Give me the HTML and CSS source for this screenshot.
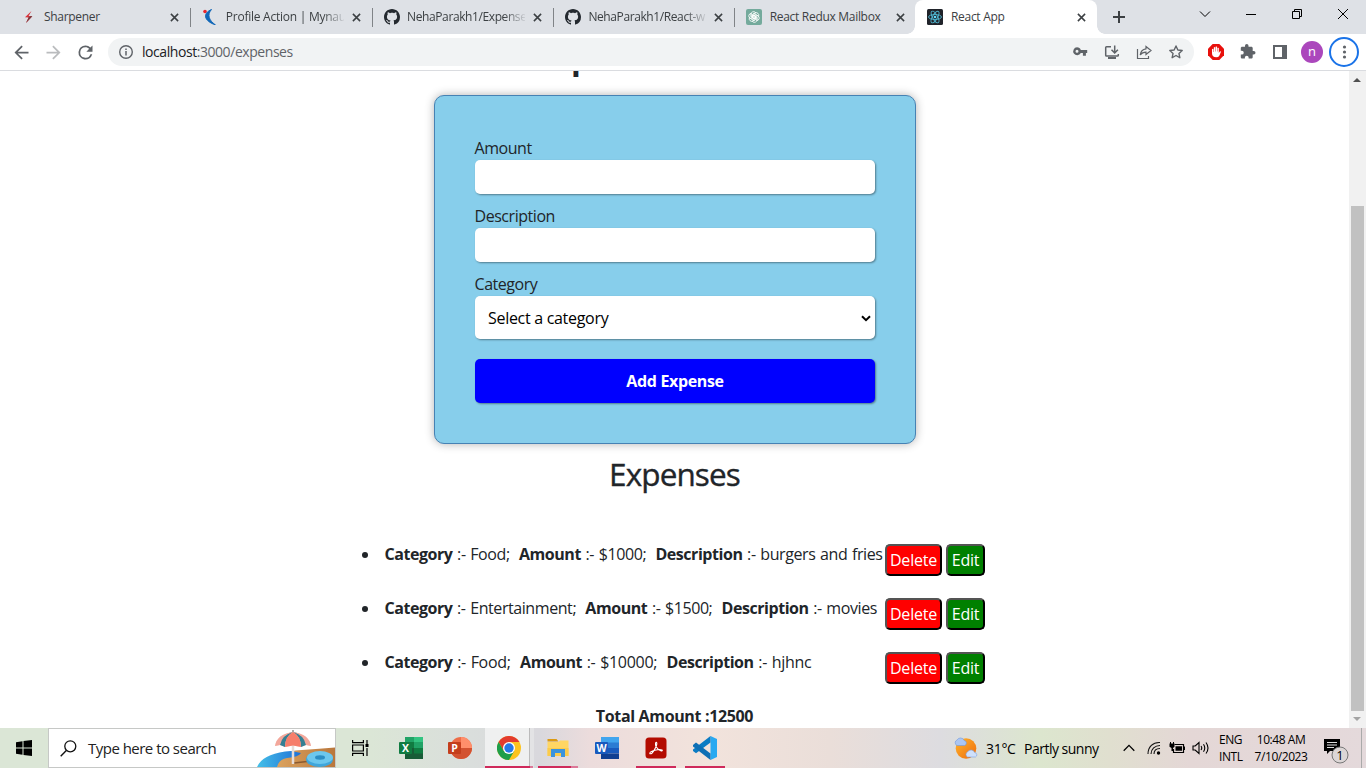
FILE: index.html
```html
<!DOCTYPE html>
<html lang="en">
<head>
<meta charset="utf-8">
<title>React App</title>
<link rel="stylesheet" href="styles.css">
</head>
<body>
<header class="tabstrip">
  <div class="tab"><svg class="fav" viewBox="0 0 16 16"><path d="M10.5 2 4 8.3l3.6.3L5 14l6.300-6.700-3.700-.3z" fill="#d8333b"/><path d="M7.600 8.600 5 14l6.300-6.700-2-.2z" fill="#7a3b40"/></svg><span class="title t1">Sharpener</span><svg class="x" viewBox="0 0 10 10"><path d="M1 1l8 8M9 1 1 9"/></svg></div>
  <div class="tab sep"><svg class="fav" viewBox="0 0 16 16"><circle cx="3" cy="2.500" r="1.800" fill="#e8262d"/><path d="M9.500.5C1 4 1 11.500 13.500 16 6.500 11 5 5.500 9.500.5z" fill="#1268b8" stroke="#1268b8"/></svg><span class="title t2 fade">Profile Action | Mynau</span><svg class="x" viewBox="0 0 10 10"><path d="M1 1l8 8M9 1 1 9"/></svg></div>
  <div class="tab sep"><svg class="fav" viewBox="0 0 16 16"><path fill="#24292f" d="M8 0C3.580 0 0 3.580 0 8c0 3.540 2.290 6.530 5.470 7.590.4.070.55-.17.55-.38 0-.19-.01-.82-.01-1.490-2.010.37-2.530-.49-2.690-.94-.09-.23-.48-.94-.82-1.130-.28-.15-.68-.52-.01-.53.63-.01 1.080.58 1.230.82.72 1.210 1.870.87 2.330.66.07-.52.28-.87.51-1.070-1.780-.2-3.640-.89-3.640-3.950 0-.87.31-1.590.82-2.150-.08-.2-.36-1.020.08-2.120 0 0 .67-.21 2.200.82.64-.18 1.320-.27 2-.27s1.360.09 2 .27c1.530-1.040 2.200-.82 2.200-.82.44 1.100.16 1.920.08 2.120.51.56.82 1.270.82 2.150 0 3.070-1.870 3.750-3.650 3.950.29.25.54.73.54 1.480 0 1.070-.01 1.930-.01 2.200 0 .21.15.46.55.38A8.010 8.010 0 0 0 16 8c0-4.420-3.580-8-8-8z"/></svg><span class="title t3 fade">NehaParakh1/Expense</span><svg class="x" viewBox="0 0 10 10"><path d="M1 1l8 8M9 1 1 9"/></svg></div>
  <div class="tab sep"><svg class="fav" viewBox="0 0 16 16"><path fill="#24292f" d="M8 0C3.580 0 0 3.580 0 8c0 3.540 2.290 6.530 5.470 7.590.4.070.55-.17.55-.38 0-.19-.01-.82-.01-1.490-2.010.37-2.530-.49-2.690-.94-.09-.23-.48-.94-.82-1.130-.28-.15-.68-.52-.01-.53.63-.01 1.080.58 1.230.82.72 1.210 1.870.87 2.330.66.07-.52.28-.87.51-1.070-1.780-.2-3.640-.89-3.640-3.950 0-.87.31-1.590.82-2.150-.08-.2-.36-1.020.08-2.120 0 0 .67-.21 2.200.82.64-.18 1.320-.27 2-.27s1.360.09 2 .27c1.530-1.040 2.200-.82 2.200-.82.44 1.100.16 1.920.08 2.120.51.56.82 1.270.82 2.150 0 3.070-1.870 3.750-3.650 3.950.29.25.54.73.54 1.480 0 1.070-.01 1.930-.01 2.200 0 .21.15.46.55.38A8.010 8.010 0 0 0 16 8c0-4.420-3.580-8-8-8z"/></svg><span class="title t3 fade">NehaParakh1/React-w</span><svg class="x" viewBox="0 0 10 10"><path d="M1 1l8 8M9 1 1 9"/></svg></div>
  <div class="tab sep"><svg class="fav" viewBox="0 0 16 16"><rect width="16" height="16" rx="2" fill="#74aa9c"/><g fill="none" stroke="#fff" stroke-width=".8"><path id="pt" d="M8 9.800 5 8V5.200a2.600 2.600 0 0 1 4.700-1.500L7 5.300v4"/><use href="#pt" transform="rotate(60 8 8)"/><use href="#pt" transform="rotate(120 8 8)"/><use href="#pt" transform="rotate(180 8 8)"/><use href="#pt" transform="rotate(240 8 8)"/><use href="#pt" transform="rotate(300 8 8)"/></g></svg><span class="title t5">React Redux Mailbox</span><svg class="x" viewBox="0 0 10 10"><path d="M1 1l8 8M9 1 1 9"/></svg></div>
  <div class="tab active"><svg class="fav" viewBox="0 0 16 16"><rect width="16" height="16" rx="1.500" fill="#20232a"/><g fill="none" stroke="#4fb6d0" stroke-width=".9"><ellipse cx="8" cy="8" rx="6.500" ry="2.500"/><ellipse cx="8" cy="8" rx="6.500" ry="2.500" transform="rotate(60 8 8)"/><ellipse cx="8" cy="8" rx="6.500" ry="2.500" transform="rotate(120 8 8)"/></g><circle cx="8" cy="8" r="1.300" fill="#61dafb"/></svg><span class="title t6">React App</span><svg class="x" viewBox="0 0 10 10"><path d="M1 1l8 8M9 1 1 9"/></svg></div>
  <svg class="plus" viewBox="0 0 12 12"><path d="M6 0v12M0 6h12" stroke="#3c4043" stroke-width="2"/></svg>
  <div class="winctl">
    <svg viewBox="0 0 46 28"><path d="M18 11.500l5 5 5-5"/></svg>
    <svg viewBox="0 0 46 28"><path d="M18 14.500h10"/></svg>
    <svg viewBox="0 0 46 28"><path d="M18.500 11.500h7v7h-7zM20.500 11.500v-2h7v7h-2"/></svg>
    <svg viewBox="0 0 46 28"><path d="M18 9l10 10M28 9 18 19"/></svg>
  </div>
</header>
<nav class="toolbar">
  <div class="navicons">
    <svg viewBox="0 0 24 24"><path fill="#5f6368" d="M20 11H7.830l5.590-5.590L12 4l-8 8 8 8 1.410-1.410L7.830 13H20z"/></svg>
    <svg viewBox="0 0 24 24"><path fill="#babcbe" d="M12 4l-1.410 1.410L16.170 11H4v2h12.170l-5.580 5.590L12 20l8-8z"/></svg>
    <svg viewBox="0 0 24 24"><path fill="#5f6368" d="M17.650 6.350A7.960 7.960 0 0 0 12 4a8 8 0 1 0 7.730 10h-2.080A6 6 0 1 1 12 6c1.660 0 3.140.69 4.220 1.780L13 11h7V4z"/></svg>
  </div>
  <div class="omnibox">
    <svg class="info" viewBox="0 0 16 16"><circle cx="8" cy="8" r="6.300" fill="none" stroke="#5f6368" stroke-width="1.400"/><path d="M8 7v4.500M8 4.500v1.500" stroke="#5f6368" stroke-width="1.500"/></svg>
    <span class="url"><b>localhost</b>:3000/expenses</span>
    <div class="cells">
      <svg viewBox="0 0 32 28"><path fill="#5f6368" fill-rule="evenodd" d="M13 9.300a4 4 0 0 1 3.800 2.800h6.400v3h-1.300v2.700h-3v-2.700h-2.100A4 4 0 1 1 13 9.300zm0 2.500a1.500 1.500 0 1 0 0 3 1.500 1.500 0 0 0 0-3z"/></svg>
      <svg viewBox="0 0 32 28"><g fill="none" stroke="#5f6368" stroke-width="1.500"><path d="M15 8.700h-4.500q-.8 0-.8.800v7.700q0 .8.800.8h11q.8 0 .8-.8V16M18.700 7.500v7M15.500 11.700l3.200 3.200 3.200-3.200"/><path d="M12 20h8" stroke-width="2"/></g></svg>
      <svg viewBox="0 0 32 28"><g fill="none" stroke="#5f6368" stroke-width="1.200"><path d="M9.500 11v9.500h11V18"/><path d="M18 8.500l5 4-5 4v-2.400c-3 0-4.500 1-5.800 2.900.4-3.200 2.200-5.800 5.800-6.200z"/></g></svg>
      <svg viewBox="0 0 32 28"><path fill="none" stroke="#5f6368" stroke-width="1.400" stroke-linejoin="round" d="M16 8l1.850 4.050 4.350.45-3.250 2.950.9 4.300L16 17.500l-3.850 2.250.9-4.300-3.250-2.950 4.350-.45z"/></svg>
    </div>
  </div>
  <div class="cells ext">
    <svg viewBox="0 0 32 28"><path fill="#e8100c" d="M12.700 6h6.600l4.700 4.700v6.600L19.300 22h-6.600L8 17.300v-6.600z"/><path fill="#fff" d="M12 11.200q.8-.8 1.400 0V14h.4V9.500q.7-.8 1.400 0V13.500h.4V8.800q.8-.8 1.500 0v4.700h.4V10q.8-.7 1.300 0v5l1-1.600q.9-.5 1.200.3l-1.700 4q-.8 1.600-3 1.600-4.300 0-4.300-4z"/></svg>
    <svg viewBox="0 0 32 28"><path fill="#5f6368" transform="translate(7.400 5.200) scale(.7)" d="M20.500 11H19V7c0-1.100-.9-2-2-2h-4V3.500a2.500 2.500 0 0 0-5 0V5H4c-1.100 0-2 .9-2 2v3.800h1.500a2.700 2.700 0 0 1 0 5.400H2V20c0 1.100.9 2 2 2h3.800v-1.500a2.700 2.700 0 0 1 5.400 0V22H17c1.100 0 2-.9 2-2v-4h1.500a2.500 2.500 0 0 0 0-5z"/></svg>
    <svg viewBox="0 0 32 28"><path fill="#5f6368" fill-rule="evenodd" d="M9 7h14v14H9zm2 2v10h7V9z"/></svg>
    <span class="cell"><span class="avatar">n</span></span>
    <span class="cell"><svg class="menu" viewBox="0 0 30 30"><circle cx="15" cy="15" r="14" fill="#fff" stroke="#1a73e8" stroke-width="2"/><g fill="#5f6368"><circle cx="15.500" cy="10" r="1.600"/><circle cx="15.500" cy="15" r="1.600"/><circle cx="15.500" cy="20" r="1.600"/></g></svg></span>
  </div>
</nav>
<div class="viewport">
  <main class="page">
    <h1 class="clipped"><span>p</span></h1>
    <section class="card">
      <label>Amount</label><div class="input"></div>
      <label class="l2">Description</label><div class="input"></div>
      <label class="l3">Category</label>
      <div class="select"><span>Select a category</span><svg viewBox="0 0 10 7"><path d="M1 1.200l4 4 4-4" fill="none" stroke="#000" stroke-width="2"/></svg></div>
      <div class="add"><span>Add Expense</span></div>
    </section>
    <h2>Expenses</h2>
    <ul>
      <li><p class="r1"><b>Category</b> :- Food;&nbsp; <b>Amount</b> :- $1000;&nbsp; <b>Description</b> :- burgers and fries</p><button class="del">Delete</button><button class="edit">Edit</button></li>
      <li><p class="r2"><b>Category</b> :- Entertainment;&nbsp; <b>Amount</b> :- $1500;&nbsp; <b>Description</b> :- movies</p><button class="del">Delete</button><button class="edit">Edit</button></li>
      <li><p class="r3"><b>Category</b> :- Food;&nbsp; <b>Amount</b> :- $10000;&nbsp; <b>Description</b> :- hjhnc</p><button class="del">Delete</button><button class="edit">Edit</button></li>
    </ul>
    <p class="total">Total Amount :12500</p>
  </main>
  <aside class="scrollbar"><i class="up"></i><i class="thumb"></i><i class="down"></i></aside>
</div>
<footer class="taskbar">
  <div class="start"><svg width="16" height="16" viewBox="0 0 16 16"><path d="M0 2.200 6.500 1.300v6.200H0zM7.500 1.100 16 0v7.500H7.500zM0 8.500h6.500v6.200L0 13.800zM7.500 8.500H16V16l-8.500-1.100z"/></svg></div>
  <div class="search">
    <svg class="mag" viewBox="0 0 17 17"><circle cx="10.300" cy="6.300" r="5.500" fill="none" stroke="#111" stroke-width="1.300"/><path d="M6.300 10.500.7 16.200" stroke="#111" stroke-width="1.400"/></svg>
    <span>Type here to search</span>
    <svg class="beach" viewBox="0 0 78 38"><defs><linearGradient id="sea" x2="1"><stop offset="0" stop-color="#45c0e8"/><stop offset="1" stop-color="#1e6fd6"/></linearGradient><linearGradient id="sand" x2="1"><stop offset="0" stop-color="#e0a862"/><stop offset="1" stop-color="#b9773c"/></linearGradient></defs>
      <path d="M12 38C26 31 22 22 45 21q18-1.500 33-2.500V38z" fill="url(#sand)"/><path d="M0 38Q6 24 34 22l10 2q-2 4-14 5-8 1-10 9z" fill="url(#sea)"/><path d="M37 34l26-3" stroke="#8a5a30" stroke-width="1.500"/>
      <path d="M36 11v24" stroke="#e6dcd8" stroke-width="2.500"/><path d="M36 1v4" stroke="#aaa" stroke-width="2"/>
      <path d="M18 17Q20 5 36 3q16 2 18 14l-5-1-5 2-8-1.500-8 1.500-5-2z" fill="#f6d3cc"/>
      <path d="M23 16Q23 6 36 3q-8 5-8 15z" fill="#357f93"/><path d="M49 16Q49 6 36 3q8 5 8 15z" fill="#357f93"/>
      <path d="M28 18q0-11 8-15 8 4 8 15l-8-1.500z" fill="#f67e6b"/><path d="M18 17Q20 5 36 3 25 6 23 16zM54 17Q52 5 36 3q11 3 13 13z" fill="#f3a79b"/>
      <ellipse cx="62.500" cy="30.500" rx="13.500" ry="7.500" fill="#3fa6db"/><ellipse cx="63" cy="28.500" rx="13" ry="6.500" fill="#6cc7ed"/><ellipse cx="63" cy="28.500" rx="5" ry="2.200" fill="#2b8ec4"/></svg>
  </div>
  <div class="tview"><svg width="18" height="16" viewBox="0 0 18 16"><path d="M1.600 0v2.600h10.800V0M1.600 16v-2.600h10.800V16M1.600 5h10.800v6H1.600zM16 0v4M16 8v8" fill="none" stroke="#000" stroke-width="1.200"/><path d="M14.500 4h3v3h-3z"/></svg></div>
  <div class="apps">
    <div class="app"><svg viewBox="0 0 24 24"><path fill="#21a366" d="M6 1h18v22H6z"/><path fill="#107c41" d="M6 6h9v6H6z"/><path fill="#33c481" d="M15 1h9v5h-9z"/><path fill="#185c37" d="M6 12h18v11H6z"/><path fill="#107c41" d="M15 12h9v5.500h-9z"/><rect y="6" width="13" height="12" rx="1" fill="#107c41"/><text x="6.500" y="16" class="glyph">X</text></svg></div>
    <div class="app"><svg viewBox="0 0 24 24"><circle cx="13" cy="12" r="11" fill="#ed6c47"/><path d="M13 1a11 11 0 0 1 11 11H13z" fill="#ff8f6b"/><path d="M2 12h22a11 11 0 0 1-22 0z" fill="#d35230"/><rect y="6" width="13" height="12" rx="1" fill="#c43e1c"/><text x="6.500" y="16" class="glyph">P</text></svg></div>
    <div class="app current"><svg viewBox="0 0 24 24"><circle cx="12" cy="12" r="12" fill="#fcc31e"/><path d="M1.600 6A12 12 0 0 1 22.400 6H12L6.800 15z" fill="#e33b2e"/><path d="M1.600 6A12 12 0 0 0 12 24l5.200-9H6.800z" fill="#1e9e4a"/><circle cx="12" cy="12" r="6" fill="#fff"/><circle cx="12" cy="12" r="4.700" fill="#2678e8"/></svg><i class="run"></i></div>
    <div class="app"><svg viewBox="0 0 24 24"><path fill="#dc9a12" d="M1.500 3h9l2 2.500h-11z"/><path fill="#ffd663" d="M1.500 6h11l1.500-1.500h8.500V20h-21z"/><path fill="#fbcb4c" d="M1.500 12h21v8h-21z"/><path fill="#3b93dd" d="M5 13h14v8h-4v-4H9v4H5z"/></svg><i class="run ex"></i></div>
    <div class="app"><svg viewBox="0 0 24 24"><path fill="#41a5ee" d="M6 1h18v6H6z"/><path fill="#2b7cd3" d="M6 6.500h18V12H6z"/><path fill="#185abd" d="M6 12h18v5.500H6z"/><path fill="#103f91" d="M6 17.500h18V23H6z"/><rect y="6" width="13" height="12" rx="1" fill="#185abd"/><text x="6.500" y="16" class="glyph">W</text></svg></div>
    <div class="app"><svg viewBox="0 0 24 24"><rect x="1.500" y="1.500" width="21" height="21" rx="3.500" fill="#b30b00"/><path d="M5.800 17.300c.2-2.300 9.500-4.600 12.200-3.300 1.500 1.600-3 1.200-5.700-3-1.600-3-.6-5.200.3-4.500 1.200 1.500-2.300 8.500-4.500 10.500-1.200 1-2.300 1-2.300.3z" fill="none" stroke="#fff" stroke-width="1.100"/></svg><i class="run full"></i></div>
    <div class="app"><svg viewBox="0 0 24 24"><path fill="#29a9f1" d="M17.500 0 24 3v18l-6.500 3z"/><path fill="#0b7cc4" d="M17.500 0v6.500L3 17.300 0 15v-1.500z"/><path fill="#0d6fb5" d="M17.500 24v-6.500L3 6.500 0 9v1.500z"/></svg><i class="run full"></i></div>
  </div>
  <div class="tray">
    <svg class="weather" viewBox="0 0 24 24"><defs><linearGradient id="sun" y2="1"><stop stop-color="#ffb52d"/><stop offset="1" stop-color="#ee6b0c"/></linearGradient></defs><circle cx="12" cy="12.500" r="10.300" fill="url(#sun)"/><path d="M3 9.500a3 3 0 0 1 0-5.500 4 4 0 0 1 7.200.5 2.600 2.600 0 0 1 .5 5z" fill="#abc6f2" stroke="#6f98df" stroke-width=".6"/><path d="M13.500 21a2.800 2.800 0 0 1 0-5 4 4 0 0 1 7.200.5 2.400 2.400 0 0 1 .8 4.500z" fill="#cfe0fb" stroke="#7ba1e0" stroke-width=".6"/></svg>
    <span class="temp">31°C</span><span class="cond">Partly sunny</span>
    <svg class="caret" viewBox="0 0 12 8"><path d="M.7 6.700 6 1.400l5.300 5.300" fill="none" stroke="#000" stroke-width="1.300"/></svg>
    <svg class="wifi" viewBox="0 0 14 14"><g fill="none" stroke="#111" stroke-width="1.100"><path d="M1 13C1 6 6 1 13 1.500"/><path d="M4 13c0-5 4-8.500 9-8.500" /><path d="M7 13c0-3.500 2.500-5.500 6-5.500"/></g><circle cx="11.500" cy="12" r="1.700"/></svg>
    <svg class="bat" viewBox="0 0 16 12"><path d="M5.500 2.500h9v8h-10V7" fill="none" stroke="#000" stroke-width="1.200"/><path d="M6.500 4.300h6.500v4.500H6.500zM15 4.500h1v3.500h-1zM.5 1.500h5v3.300L4 6v3H2.500V6L.5 4.800zM1 0h1v2H1zM4 0h1v2H4z"/></svg>
    <svg class="vol" viewBox="0 0 18 14"><g fill="none" stroke="#000" stroke-width="1.100"><path d="M1 5h2.200L7 1.500v11L3.200 9H1zM9 5q1.500 2 0 4M11.500 3.300q2.500 3.700 0 7.400M14 1.500q4 5.500 0 11"/></g></svg>
    <div class="lang"><span>ENG</span><span>INTL</span></div>
    <div class="clock"><span class="time">10:48 AM</span><span class="date">7/10/2023</span></div>
    <svg class="note" viewBox="0 0 26 26"><path d="M1 1h16v12H7l-3 3v-3H1z"/><path d="M4 4.500h10M4 7h10M4 9.500h7" stroke="#ddd" stroke-width="1.200"/><circle cx="17" cy="17" r="8" fill="#dcd6d6" stroke="#777"/><text x="17" y="21.500" class="num">1</text></svg>
    <i class="peek"></i>
  </div>
</footer>
</body>
</html>
```

FILE: styles.css
```css
* { box-sizing: border-box; }
body { margin: 0; width: 1366px; height: 768px; overflow: hidden; display: flex; flex-direction: column; background: #fff; font-family: "Open Sans", "Noto Sans", sans-serif; color: #212529; }
svg { display: block; flex: none; }
p, h1, h2, ul { margin: 0; padding: 0; }

.tabstrip { height: 34px; flex: none; background: #dee1e6; display: flex; padding-left: 9px; }
.tab { width: 181.300px; flex: none; height: 34px; display: flex; align-items: center; padding-left: 12px; position: relative; }
.tab.sep::before { content: ""; position: absolute; left: 0; top: 8px; width: 1px; height: 19px; background: #808387; }
.fav { width: 16px; height: 16px; }
.title { width: 118px; margin-left: 7.500px; font-size: 12px; line-height: 18px; color: #3c4043; white-space: nowrap; letter-spacing: -.3px; }
.t1 { margin-left: 7px; }
.t2 { letter-spacing: -.25px; }
.t3 { letter-spacing: -.4px; }
.fade { -webkit-mask-image: linear-gradient(90deg, #000 82%, transparent 102%); mask-image: linear-gradient(90deg, #000 82%, transparent 102%); }
.x { width: 9px; height: 9px; margin-left: 8px; }
.x path { stroke: #3c4043; stroke-width: 1.700; }
.active { background: #fff; border-radius: 8px 8px 0 0; }
.active::before, .active::after { content: ""; position: absolute; bottom: 0; width: 8px; height: 8px; }
.active::before { left: -8px; background: radial-gradient(circle at 0 0, transparent 7.500px, #fff 8px); }
.active::after { right: -8px; background: radial-gradient(circle at 100% 0, transparent 7.500px, #fff 8px); }
.plus { width: 12px; height: 12px; margin: 11px 0 0 16px; }
.winctl { display: flex; margin-left: auto; }
.winctl svg { width: 46px; height: 28px; }
.winctl path { fill: none; stroke: #000; stroke-width: 1; }

.toolbar { height: 37px; flex: none; display: flex; align-items: center; border-bottom: 1px solid #dadce0; background: #fff; }
.navicons { display: flex; gap: 11px; padding-left: 11px; width: 108px; }
.navicons svg { width: 21px; height: 21px; }
.omnibox { width: 1086px; height: 28px; border-radius: 14px; background: #f1f3f4; display: flex; align-items: center; padding-left: 10px; }
.info { width: 16px; height: 16px; }
.url { margin-left: 8px; margin-top: -1px; font-size: 14px; color: #5f6368; letter-spacing: -.44px; }
.url b { font-weight: 400; color: #202124; }
.cells { display: flex; margin-left: auto; padding-right: 2px; }
.cells > svg { width: 32px; height: 28px; }
.ext { margin-left: 6px; padding: 0; align-items: center; }
.cell { width: 32px; display: flex; align-items: center; justify-content: center; }
.avatar { width: 22px; height: 22px; border-radius: 50%; background: #ab47bc; color: #fff; font-size: 13px; line-height: 20px; text-align: center; }
.menu { width: 30px; height: 30px; }

.viewport { height: 657px; flex: none; display: flex; }
.page { width: 1349px; display: flex; flex-direction: column; align-items: center; overflow: hidden; }
.clipped { height: 24px; width: 482px; flex: none; overflow: hidden; padding-left: 137.500px; font-size: 32px; line-height: 0; }
.clipped span { display: block; margin-top: -14px; }
.card { width: 482px; height: 349px; flex: none; border: 1px solid #4682b4; border-radius: 10px; background: #87ceeb; padding: 40px; box-shadow: 0 0 10px rgba(0,0,0,.3); margin-right: -1px; }
label { display: block; font-size: 16px; line-height: 24px; height: 24px; letter-spacing: -.45px; margin-left: -.5px; }
.l2, .l3 { margin-top: 10px; }
.input { height: 34px; background: #fff; border-radius: 5px; box-shadow: 1px 1px 2px rgba(0,0,0,.4); }
.select { height: 43px; background: #fff; border-radius: 5px; box-shadow: 1px 1px 2px rgba(0,0,0,.4); display: flex; align-items: center; justify-content: space-between; padding: 1px 4px 0 13px; color: #000; font-size: 16px; letter-spacing: -.3px; }
.select svg { width: 10px; height: 7px; }
.add { height: 44px; margin-top: 20px; background: #00f; border-radius: 5px; box-shadow: 1px 1px 2px rgba(0,0,0,.4); color: #fff; font-weight: 700; font-size: 16px; line-height: 44px; text-align: center; letter-spacing: -.35px; }
h2 { font-size: 31.500px; line-height: 38px; font-weight: 500; height: 100px; padding-top: 11px; letter-spacing: -.9px; flex: none; -webkit-text-stroke: .35px #212529; }
ul { list-style: none; width: 626px; padding-left: 23px; }
li { height: 54px; display: flex; position: relative; }
li::before { content: ""; position: absolute; left: -23px; top: 8px; width: 6px; height: 6px; border-radius: 50%; background: #212529; }
li p { width: 500px; margin-top: -1px; font-size: 16px; line-height: 22px; white-space: nowrap; letter-spacing: -.3px; word-spacing: .85px; }
li b { letter-spacing: -.45px; }
.r1 { letter-spacing: -.4px; }
.r2 { letter-spacing: -.42px; }
button { height: 32px; border: 2px outset #000; border-radius: 5px; color: #fff; font: 16px/26px "Open Sans", sans-serif; padding: 0 0 0 1px; letter-spacing: -.2px; flex: none; }
.del { width: 57px; background: #f00; margin-right: 4px; }
.edit { width: 39px; background: #008000; }
.total { font-weight: 700; font-size: 16px; line-height: 24px; margin-top: -2px; letter-spacing: -.35px; }
.scrollbar { width: 17px; background: #f1f1f1; position: relative; }
.scrollbar i { position: absolute; left: 2px; }
.thumb { top: 135px; width: 13px; height: 505px; background: #c1c1c1; }
.scrollbar .up, .scrollbar .down { left: 4px; border: 4px solid transparent; }
.scrollbar .up { top: 3px; border-bottom-color: #505050; }
.scrollbar .down { bottom: 3px; border-top-color: #a3a3a3; }

.taskbar { height: 40px; flex: none; display: flex; background: linear-gradient(90deg, #dbe6d6 0, #dbe6d6 370px, #dadedc 470px, #d9d8dd 540px, #ecdcdc 590px, #f2e3dc 710px, #eaded9 830px, #dddce0 940px, #dce6ce 1040px, #e0dfcf 1110px, #e4d7d6 1190px, #e4d9db 1366px); color: #000; }
.start { width: 48px; padding: 12px 0 0 16px; }
.search { width: 288px; height: 40px; border: 1px solid #c6c8c6; background: #fff; display: flex; align-items: center; padding-left: 11px; position: relative; font-size: 15px; color: #222; letter-spacing: -.52px; }
.mag { width: 17px; height: 17px; margin-right: 11px; }
.beach { position: absolute; right: 0; bottom: 0; width: 78px; height: 38px; }
.tview { width: 51px; padding: 12px 0 0 15px; }
.apps { display: flex; }
.app { width: 49px; display: flex; align-items: center; justify-content: center; position: relative; }
.app svg { width: 24px; height: 24px; margin-left: -1.500px; }
.glyph { font: 700 10.500px "Open Sans", sans-serif; fill: #fff; text-anchor: middle; }
.current { left: 0; background: linear-gradient(90deg, #eff0f0 44px, #bbb 44px, #bbb 45px, #e3e3e5 45px); }
.run { position: absolute; bottom: 0; left: 0; width: 48px; height: 2px; background: linear-gradient(90deg, #cf2a5b 45px, #dc7898 45px); }
.ex { left: 4px; width: 40px; background: linear-gradient(90deg, #cf2a5b 33px, #dc7898 33px); }
.full { left: 4px; width: 40px; background: #cf2a5b; }
.tray { display: flex; align-items: center; margin-left: auto; font-size: 14px; }
.weather { width: 24px; height: 24px; margin-right: 8px; }
.temp { width: 38px; letter-spacing: -.3px; }
.cond { width: 99px; white-space: nowrap; letter-spacing: -.5px; }
.caret { width: 12px; height: 8px; margin-right: 12px; }
.wifi { width: 14px; height: 14px; margin-right: 8px; }
.bat { width: 16px; height: 12px; margin-right: 7px; }
.vol { width: 18px; height: 14px; margin-right: 9px; }
.lang, .clock { display: flex; flex-direction: column; font-size: 12px; line-height: 17px; letter-spacing: -.45px; height: 34px; }
.lang { width: 34px; }
.clock { width: 56px; align-items: center; white-space: nowrap; margin-right: 14px; }
.note { width: 26px; height: 26px; margin-top: 5px; }
.num { font: 13px "Open Sans", sans-serif; text-anchor: middle; }
.peek { width: 1px; height: 40px; background: #aaa; margin: 0 4px 0 12px; }
```
